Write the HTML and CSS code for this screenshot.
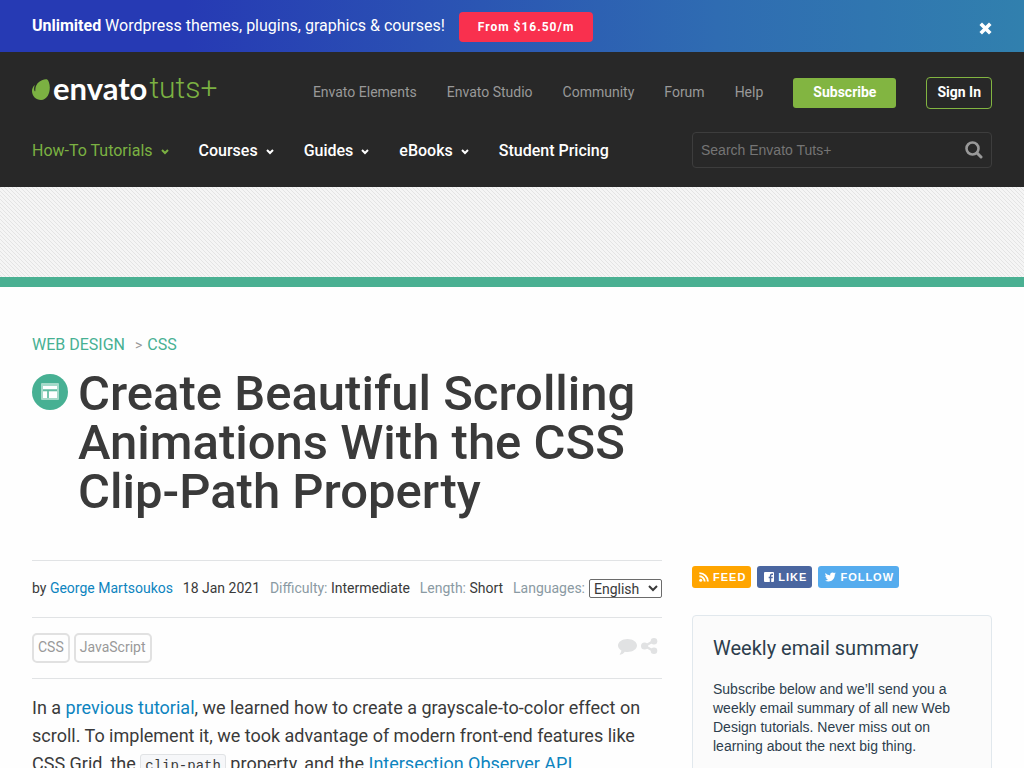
FILE: index.html
```html
<!DOCTYPE html>
<html lang="en">
<head>
<meta charset="utf-8">
<title>Create Beautiful Scrolling Animations With the CSS Clip-Path Property</title>
<link rel="stylesheet" href="styles.css">
</head>
<body>
<aside class="promo">
  <p class="promo-text"><strong>Unlimited</strong> Wordpress themes, plugins, graphics &amp; courses!</p>
  <a class="promo-button" href="#">From $16.50/m</a>
  <button class="promo-close" type="button" aria-label="Close"><svg width="13" height="13" viewBox="0 0 13 13"><path d="M3 3l7 7M10 3l-7 7" stroke="#fff" stroke-width="3.600" stroke-linecap="square"/></svg></button>
</aside>
<header class="header">
  <div class="header-row">
    <a class="logo" href="#" aria-label="Envato Tuts+">
      <svg class="logo-leaf" width="18" height="21" viewBox="0 0 18 21"><path fill="#7bb142" d="M15.200.4C13.800-.4 8.700.8 5.600 4.200 3.500 6.600 3.300 9.500 3.300 12c0 .4-.4.5-.6.2C1.800 10.900 2 8.600 2.600 6.800c.2-.5-.1-.7-.4-.3C.7 8.300 0 9.900 0 12c0 5 4 9 9 9 8 0 10.200-11.500 8-17.600C16.500 1.800 15.900.8 15.200.4z"/></svg>
      <span class="logo-main">envato</span><span class="logo-sub">tuts+</span>
    </a>
    <nav class="top-links" aria-label="Envato sites">
      <a href="#">Envato Elements</a><a href="#">Envato Studio</a><a href="#">Community</a><a href="#">Forum</a><a href="#">Help</a>
      <a class="subscribe" href="#">Subscribe</a><a class="sign-in" href="#">Sign In</a>
    </nav>
  </div>
  <div class="header-row nav-row">
    <nav class="main-nav" aria-label="Main">
      <a class="active" href="#">How-To Tutorials<svg width="8" height="6" viewBox="0 0 8 6"><path d="M1 1l3 3 3-3"/></svg></a>
      <a href="#">Courses<svg width="8" height="6" viewBox="0 0 8 6"><path d="M1 1l3 3 3-3"/></svg></a>
      <a href="#">Guides<svg width="8" height="6" viewBox="0 0 8 6"><path d="M1 1l3 3 3-3"/></svg></a>
      <a href="#">eBooks<svg width="8" height="6" viewBox="0 0 8 6"><path d="M1 1l3 3 3-3"/></svg></a>
      <a href="#">Student Pricing</a>
    </nav>
    <form class="search">
      <input type="search" placeholder="Search Envato Tuts+" aria-label="Search Envato Tuts+">
      <button type="button" aria-label="Search"><svg width="18" height="18" viewBox="0 0 18 18"><circle cx="7.500" cy="7.500" r="6" fill="none" stroke="#999" stroke-width="2.600"/><path d="M12 12l4 4" stroke="#999" stroke-width="3" stroke-linecap="round"/></svg></button>
    </form>
  </div>
</header>
<div class="ad-strip"></div>
<main class="page">
  <nav class="breadcrumb" aria-label="Breadcrumb"><a href="#">WEB DESIGN</a><span>&gt;</span><a href="#">CSS</a></nav>
  <div class="title-row">
    <svg class="topic-icon" width="36" height="36" viewBox="0 0 36 36"><circle cx="18" cy="18" r="18" fill="#47b093"/><rect x="9" y="9" width="18" height="17" rx="1" fill="#a5dac9"/><path d="M11 12h14v3H11zM11 17.500h4V24h-4zM17 17.500h8V24h-8z" fill="#fff"/><path d="M11 16.200h14M16 16.500v7.500" stroke="#47b093"/></svg>
    <h1>Create Beautiful Scrolling Animations With the CSS Clip-Path Property</h1>
  </div>
  <div class="columns">
    <article class="article">
      <div class="meta">
        <span>by <a href="#">George Martsoukos</a></span>
        <time datetime="2021-01-18">18 Jan 2021</time>
        <span><span class="meta-label">Difficulty:</span> Intermediate</span>
        <span><span class="meta-label">Length:</span> Short</span>
        <span class="language"><label class="meta-label" for="language">Languages:</label> <select id="language"><option>English</option></select></span>
      </div>
      <div class="tags">
        <a class="tag" href="#">CSS</a><a class="tag" href="#">JavaScript</a>
        <div class="actions">
          <a href="#" aria-label="Comments"><svg width="19" height="17" viewBox="0 0 19 17"><path fill="#e1e2e3" d="M9.500 1C4.300 1 0 3.900 0 7.500c0 2 1.300 3.800 3.400 5-.2 1.500-.8 2.600-1.600 3.700-.2.400 0 .700.400.600 2-.5 3.500-1.400 4.600-3 .900.200 1.800.200 2.700.200C14.700 14 19 11.100 19 7.500S14.700 1 9.500 1z"/></svg></a>
          <a href="#" aria-label="Share"><svg width="17" height="16" viewBox="0 0 17 16"><path d="M12.500 3L4 8l8.500 5" fill="none" stroke="#e1e2e3" stroke-width="2.400"/><g fill="#e1e2e3"><circle cx="13" cy="3.300" r="3.300"/><circle cx="3.500" cy="8" r="3.500"/><circle cx="13" cy="12.700" r="3.300"/></g></svg></a>
        </div>
      </div>
      <p class="body-text">In a <a href="#">previous tutorial</a>, we learned how to create a grayscale-to-color effect on scroll. To implement it, we took advantage of modern front-end features like CSS Grid, the <code>clip-path</code> property, and the <a href="#">Intersection Observer API</a>.</p>
    </article>
    <aside class="sidebar">
      <div class="social">
        <a class="feed" href="#"><svg width="10" height="10" viewBox="0 0 10 10"><circle cx="1.700" cy="8.300" r="1.500" fill="#fff"/><path d="M.4 4.300a5.300 5.300 0 0 1 5.300 5.300M.4 1.100a8.500 8.500 0 0 1 8.500 8.500" fill="none" stroke="#fff" stroke-width="1.900"/></svg>FEED</a>
        <a class="like" href="#"><svg width="10" height="10" viewBox="0 0 10 10"><rect width="10" height="10" rx="1" fill="#fff"/><path d="M9 2.300H8C6.800 2.300 6.500 3 6.500 4v6M4.700 5.500h4" fill="none" stroke="#4a66a0" stroke-width="1.400"/></svg>LIKE</a>
        <a class="follow" href="#"><svg width="11" height="10" viewBox="0 0 11 10"><path fill="#fff" d="M11 1.400l-1.200 1.100C10 6.700 6.900 9.500 3.500 9.500 2.200 9.500 1 9.100 0 8.500c1.200.1 2.300-.2 3.200-.9-1 0-1.800-.7-2.100-1.500h1C1 5.800.3 4.900.3 3.800l1 .3C.3 3.300 0 2.100.6 1.100 1.700 2.500 3.400 3.300 5.200 3.400 4.800 1.700 6.100.4 7.500.4c.7 0 1.200.3 1.600.7L10.600.6 9.700 1.800z"/></svg>FOLLOW</a>
      </div>
      <section class="summary">
        <h2>Weekly email summary</h2>
        <p>Subscribe below and we’ll send you a weekly email summary of all new Web Design tutorials. Never miss out on learning about the next big thing.</p>
      </section>
    </aside>
  </div>
</main>
</body>
</html>
```
FILE: styles.css
```css
* { box-sizing: border-box; }
body { margin: 0; background: #fefefe; color: #3a3a3a; font-family: Roboto, "Liberation Sans", sans-serif; font-size: 14px; }
a { color: #0d84bf; text-decoration: none; }
h1, h2, p { margin: 0; }
button, input, select { font-family: inherit; }
svg { flex-shrink: 0; }

.promo { display: flex; align-items: center; height: 52px; padding: 0 32px; color: #fff; background: linear-gradient(to right, #263ab4 0%, #263ab4 18%, #2f6cb2 70%, #3180ae 100%); }
.promo-text { font-size: 16px; line-height: 24px; }
.promo-button { margin: 2px auto 0 14px; padding: 0 19px; border-radius: 4px; background: #f9304e; color: #fff; font-size: 12px; font-weight: 700; line-height: 30px; letter-spacing: 1px; }
.promo-close { display: flex; padding: 0; margin-top: 4px; border: 0; background: none; }

.header { padding: 25px 32px 19px; background: #282828; }
.header-row { display: flex; align-items: center; justify-content: space-between; }
.nav-row { margin-top: 23px; }
.logo { display: flex; align-items: center; height: 32px; padding-bottom: 10px; line-height: 32px; }
.logo-main { margin-left: 3px; color: #fff; font-family: Lato, sans-serif; font-size: 31px; font-weight: 700; }
.logo-sub { margin-left: 2px; color: #7bb142; font-size: 30px; font-weight: 300; }
.logo-leaf { margin-top: 3px; }
.top-links { display: flex; align-items: center; gap: 30px; }
.top-links a { padding-bottom: 2px; color: #999; line-height: 28px; }
.top-links .subscribe { padding: 0 20px 2px; border-radius: 3px; background: #82b541; color: #fff; font-weight: 700; }
.top-links .sign-in { padding: 0 10px 2px; border: 1px solid #82b541; border-radius: 4px; color: #fff; font-weight: 700; }
.main-nav { display: flex; gap: 30px; font-size: 16px; font-weight: 500; }
.main-nav a { display: flex; align-items: center; gap: 8px; color: #fff; }
.main-nav .active { color: #7bb142; font-weight: 400; }
.main-nav svg { margin-top: 4px; fill: none; stroke: currentColor; stroke-width: 2; }
.search { display: flex; align-items: center; width: 300px; height: 36px; padding: 0 8px; border: 1px solid #3d3d3d; border-radius: 4px; }
.search input { flex: 1; min-width: 0; padding: 0; border: 0; outline: 0; background: none; color: #999; font-family: "Liberation Sans", sans-serif; font-size: 14px; }
.search input::placeholder { color: #757575; }
.search button { display: flex; padding: 0; border: 0; background: none; }

.ad-strip { height: 100px; border-bottom: 10px solid #4ab092; background: linear-gradient(45deg, #e4e4e4 0 12%, #f5f5f5 12% 38%, #e4e4e4 38% 62%, #f5f5f5 62% 88%, #e4e4e4 88%) 0 0 / 4px 4px; }

.page { padding: 47px 32px; }
.breadcrumb { display: flex; align-items: center; font-size: 16px; line-height: 22px; }
.breadcrumb a { color: #47b093; }
.breadcrumb span { margin: 0 5px 0 10px; color: #999; font-size: 14px; }
.title-row { display: flex; gap: 10px; max-width: 630px; margin-top: 13px; }
.topic-icon { margin-top: 5px; }
h1 { font-size: 49px; font-weight: 500; line-height: 49px; }
.columns { display: grid; grid-template-columns: minmax(0, 1fr) 300px; gap: 30px; margin-top: 44px; }
.meta { display: flex; align-items: center; justify-content: space-between; height: 58px; padding-bottom: 2px; border: solid #e1e3e5; border-width: 1px 0; white-space: nowrap; }
.meta-label { color: #8a9aa3; }
.language { display: flex; align-items: center; gap: 4px; }
select { width: 73px; height: 19px; padding: 0; border: 1px solid #6b6b6b; border-radius: 2px; background: #fff; color: #3a3a3a; font-size: 14px; }
.tags { display: flex; align-items: center; gap: 4px; height: 61px; border-bottom: 1px solid #e1e3e5; }
.tag { padding: 0 4px 2px; border: 2px solid #e1e1e1; border-radius: 5px; color: #999; line-height: 24px; }
.actions { display: flex; gap: 4px; margin: 0 4px 4px auto; }
.actions a { display: flex; }
.body-text { margin-top: 15px; font-size: 18px; line-height: 28px; }
code { padding: 3px 4px; border: 1px solid #e1e3e5; border-radius: 3px; background: #f6f7f9; font-family: "Liberation Mono", monospace; font-size: 14px; }
.social { display: flex; gap: 6px; margin-top: 6px; }
.social a { display: flex; align-items: center; gap: 4px; padding: 0 5px 0 7px; border-radius: 3px; color: #fff; font-family: "Liberation Sans", sans-serif; font-size: 11px; font-weight: 700; line-height: 22px; letter-spacing: 1px; }
.social .feed { background: #ffa500; }
.social .like { background: #4a66a0; }
.social .follow { background: #55acee; }
.summary { margin-top: 27px; padding: 20px 20px 60px; border: 1px solid #e1e8ed; border-radius: 4px; background: #fbfbfb; color: #2d3e4d; }
.summary h2 { font-size: 20px; font-weight: 400; line-height: 24px; }
.summary p { margin-top: 20px; font-family: "Liberation Sans", sans-serif; font-size: 14px; line-height: 19px; }
```
